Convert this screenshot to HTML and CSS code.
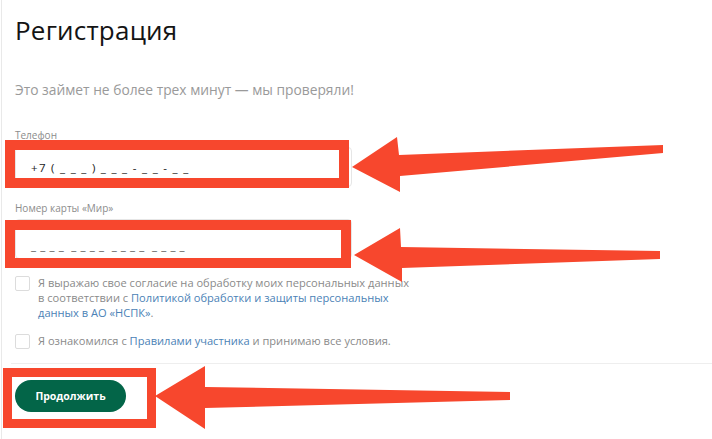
FILE: index.html
```html
<!DOCTYPE html>
<html lang="ru">
<head>
<meta charset="utf-8">
<link rel="stylesheet" href="styles.css">
</head>
<body>
<div class="page">
  <h1 class="title">Регистрация</h1>
  <p class="subtitle">Это займет не более трех минут — мы проверяли!</p>

  <div class="field">
    <label class="field-label">Телефон</label>
    <div class="input">+7 ( _ _ _ ) _ _ _ - _ _ - _ _</div>
  </div>

  <div class="field field-card">
    <label class="field-label">Номер карты «Мир»</label>
    <div class="input input-card"><span class="grp">_ _ _ _</span><span class="grp">_ _ _ _</span><span class="grp">_ _ _ _</span><span class="grp">_ _ _ _</span></div>
  </div>

  <div class="check check-first">
    <span class="box"></span>
    <span class="check-text">Я выражаю свое согласие на обработку моих персональных данных в соответствии с <a class="link">Политикой обработки и защиты персональных данных в АО «НСПК»</a>.</span>
  </div>
  <div class="check check-second">
    <span class="box"></span>
    <span class="check-text">Я ознакомился с <a class="link">Правилами участника</a> и принимаю все условия.</span>
  </div>

  <div class="divider"></div>

  <div class="actions">
    <button class="btn">Продолжить</button>
  </div>
</div>

<div class="mark mark-phone"></div>
<div class="mark mark-card"></div>
<div class="mark mark-btn"></div>
<svg class="arrows" width="712" height="439" viewBox="0 0 712 439">
  <polygon points="352,167 397,137 399,155 663,145 663,153 400,176 400,192"/>
  <polygon points="354,255 400,228 401,247 660,251 660,259 402,268 402,282"/>
  <polygon points="155,396 205,366 205,387 510,392 510,400 205,408 205,429"/>
</svg>
</body>
</html>
```

FILE: styles.css
```css
html, body {
  margin: 0;
  padding: 0;
  background: #fff;
}
body {
  width: 712px;
  height: 439px;
  overflow: hidden;
  position: relative;
  font-family: "Open Sans", "Noto Sans", sans-serif;
}
.page {
  margin-left: 1px;
  border-left: 1px solid #e9e9e9;
  padding-left: 13px;
  height: 439px;
  box-sizing: border-box;
  padding-top: 14px;
}
.title {
  margin: 0;
  font-size: 26px;
  line-height: 32px;
  font-weight: 500;
  color: #141414;
  letter-spacing: 0.2px;
}
.subtitle {
  margin: 35px 0 0;
  font-size: 13.8px;
  line-height: 18px;
  color: #9a9a9a;
}
.field {
  margin-top: 29px;
  width: 337px;
}
.field-card {
  margin-top: 14px;
}
.field-label {
  display: block;
  font-size: 10px;
  line-height: 14px;
  color: #8c8c8c;
}
.input {
  margin-top: 5px;
  height: 40px;
  box-sizing: border-box;
  border: 1px solid #e6e6e6;
  border-radius: 4px;
  padding: 0 15px;
  display: flex;
  align-items: center;
  font-size: 11.5px;
  letter-spacing: 1.3px;
  color: #222;
  white-space: pre;
}
.input-card {
  margin-top: 4px;
  color: #555;
  padding-top: 12px;
  letter-spacing: 0.6px;
  gap: 7px;
}
.check {
  display: flex;
  gap: 8px;
}
.check-first {
  margin-top: 16px;
}
.check-second {
  margin-top: 13px;
}
.box {
  flex: none;
  width: 15px;
  height: 15px;
  box-sizing: border-box;
  border: 1px solid #dcdcdc;
  border-radius: 2px;
  margin-top: 1px;
}
.check-text {
  width: 378px;
  font-size: 11.1px;
  line-height: 15px;
  color: #8a8a8a;
}
.link {
  color: #4b82b6;
}
.divider {
  margin-top: 14px;
  height: 1px;
  background: #eeeeee;
  margin-left: -4px;
}
.actions {
  margin-top: 16px;
}
.btn {
  width: 111px;
  height: 32px;
  border: none;
  border-radius: 16px;
  background: #036548;
  color: #fff;
  font-family: "Open Sans", "Noto Sans", sans-serif;
  font-weight: 700;
  font-size: 10.5px;
  padding: 0;
}
.mark {
  position: absolute;
  box-sizing: border-box;
  border: 10px solid #f7472d;
}
.mark-phone {
  left: 5px;
  top: 140px;
  width: 344px;
  height: 48px;
}
.mark-card {
  left: 5px;
  top: 220px;
  width: 346px;
  height: 48px;
}
.mark-btn {
  left: 3px;
  top: 368px;
  width: 153px;
  height: 60px;
  border-width: 9px;
}
.arrows {
  position: absolute;
  left: 0;
  top: 0;
  fill: #f7472d;
}
```
